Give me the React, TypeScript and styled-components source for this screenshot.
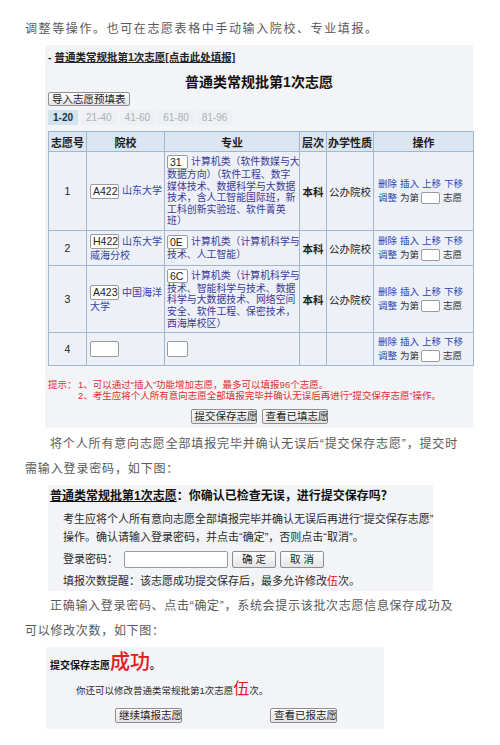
import styled, { createGlobalStyle } from "styled-components";

const GlobalStyle = createGlobalStyle`
  body {
    margin: 0;
    background: #fff;
    font-family: "Liberation Sans", "Noto Sans CJK SC", sans-serif;
  }
`;

const Page = styled.div`
  width: 500px;
  padding-top: 17px;
  padding-bottom: 10px;
`;

const Para = styled.p<{ $indent?: boolean; $gap?: number; $spacing?: number }>`
  margin: ${(p) => p.$gap ?? 0}px 0 0;
  padding-left: 25px;
  font-size: 12px;
  line-height: 25px;
  letter-spacing: ${(p) => p.$spacing ?? 1.1}px;
  color: #5a5a5a;
  white-space: nowrap;
  text-indent: ${(p) => (p.$indent ? "25px" : "0")};
`;

const Panel = styled.div<{ $left: number; $width: number; $gap: number }>`
  box-sizing: border-box;
  margin: ${(p) => p.$gap}px 0 0 ${(p) => p.$left}px;
  width: ${(p) => p.$width}px;
  background: #f3f4f8;
`;

const FormPanel = styled(Panel)`
  padding: 5px 3px 4px;
`;

const BatchLink = styled.div`
  font-size: 10.5px;
  line-height: 14px;
  font-weight: bold;
  color: #222;

  u {
    text-underline-offset: 1px;
  }
`;

const FormTitle = styled.h3`
  margin: 10px 0 2px;
  text-align: center;
  font-size: 14px;
  line-height: 16px;
  font-weight: bold;
  color: #111;
`;

const Toolbar = styled.div`
  display: flex;
`;

const Btn = styled.button<{ $w?: number; $h?: number }>`
  box-sizing: border-box;
  height: ${(p) => p.$h ?? 15}px;
  ${(p) => (p.$w ? `width: ${p.$w}px;` : "")}
  padding: 0 3px;
  font-family: inherit;
  font-size: 10.5px;
  line-height: 13px;
  color: #222;
  border: 1px solid #8e8e8e;
  border-radius: 2px;
  background: linear-gradient(#fefefe, #e4e4e4);
  white-space: nowrap;
  cursor: pointer;
`;

const Tabs = styled.div`
  display: flex;
  gap: 3px;
  margin-top: 4px;
`;

const Tab = styled.span<{ $active?: boolean }>`
  height: 15px;
  padding: 0 5px;
  font-size: 10px;
  line-height: 15px;
  background: ${(p) => (p.$active ? "#d2e4ee" : "#eef0f4")};
  color: ${(p) => (p.$active ? "#1f2d44" : "#aab0b8")};
  font-weight: ${(p) => (p.$active ? "bold" : "normal")};
`;

const Grid = styled.table`
  border-collapse: collapse;
  table-layout: fixed;
  width: 425px;
  margin-top: 6px;
  font-size: 10.5px;
  color: #222;
`;

const HeadCell = styled.th`
  height: 19px;
  padding: 0;
  border: 1px solid #a2b6cc;
  background: #dbe6f2;
  font-size: 11px;
  font-weight: bold;
  color: #1d1d1d;
  text-align: center;
  white-space: nowrap;
`;

const Cell = styled.td<{ $align?: string; $bold?: boolean; $pad?: string }>`
  padding: ${(p) => p.$pad ?? "2px 3px"};
  border: 1px solid #a2b6cc;
  background: #edf1f7;
  text-align: ${(p) => p.$align ?? "left"};
  font-weight: ${(p) => (p.$bold ? "bold" : "normal")};
  vertical-align: middle;
  white-space: nowrap;
  overflow: hidden;
`;

const CodeBox = styled.span<{ $w: number; $h?: number }>`
  display: inline-block;
  box-sizing: border-box;
  width: ${(p) => p.$w}px;
  height: ${(p) => p.$h ?? 15}px;
  margin-right: 3px;
  padding: 0 2px;
  border: 1px solid #9b9b9b;
  border-radius: 2px;
  background: #fff;
  font-size: 10.5px;
  line-height: 13px;
  color: #222;
  vertical-align: middle;
`;

const SchoolText = styled.span`
  display: inline-block;
  font-size: 10px;
  line-height: 12px;
  color: #3345a8;
  vertical-align: middle;
`;

const SchoolBlock = styled.div`
  font-size: 10px;
  line-height: 13px;
  color: #3345a8;
`;

const MajorText = styled.div`
  font-size: 9.9px;
  line-height: 11.6px;
  color: #3a3a98;
`;

const Ops = styled.div`
  font-size: 9.5px;
  line-height: 14px;
  color: #333;
`;

const OpLink = styled.a`
  color: #2b43b2;
  text-decoration: none;
  margin-right: 3px;
`;

const OrderBox = styled.span`
  display: inline-block;
  box-sizing: border-box;
  width: 19px;
  height: 12px;
  margin: 0 3px 0 2px;
  border: 1px solid #9b9b9b;
  border-radius: 2px;
  background: #fff;
  vertical-align: middle;
`;

const Hint = styled.div`
  display: flex;
  margin-top: 13px;
  font-size: 9.5px;
  line-height: 11px;
  color: #e0302e;
  white-space: nowrap;
`;

const HintLabel = styled.span`
  flex: none;
  width: 30px;
`;

const CenterButtons = styled.div`
  display: flex;
  justify-content: center;
  gap: 5px;
  margin-top: 8px;
`;

const ConfirmPanel = styled(Panel)`
  padding: 3px 0 2px 2px;
`;

const ConfirmTitle = styled.div`
  font-size: 12px;
  line-height: 16px;
  font-weight: bold;
  color: #111;
`;

const ConfirmBody = styled.div`
  margin-top: 6px;
  padding-left: 13px;
  font-size: 11px;
  line-height: 18px;
  color: #2a2a2a;
  white-space: nowrap;
`;

const PassRow = styled.div`
  display: flex;
  align-items: center;
  gap: 4px;
  height: 18px;
  margin-top: 4px;
`;

const PassInput = styled.span`
  box-sizing: border-box;
  width: 104px;
  height: 17px;
  margin-left: 2px;
  border: 1px solid #999;
  border-radius: 2px;
  background: #fff;
`;

const Reminder = styled.div`
  margin-top: 5px;
  line-height: 16px;
`;

const Red = styled.span<{ $size?: number }>`
  color: #e0201e;
  ${(p) => (p.$size ? `font-size: ${p.$size}px;` : "")}
`;

const DonePanel = styled(Panel)`
  padding: 3px 0 6px 4px;
`;

const DoneTitle = styled.div`
  font-size: 10px;
  line-height: 24px;
  font-weight: bold;
  color: #111;
`;

const BigRed = styled.span`
  font-size: 20px;
  font-weight: 500;
  color: #e0201e;
`;

const DoneLine = styled.div`
  margin-top: 2px;
  padding-left: 26px;
  font-size: 9.5px;
  line-height: 18px;
  color: #2a2a2a;
`;

const DoneButtons = styled.div`
  display: flex;
  gap: 88px;
  margin-top: 8px;
  padding-left: 65px;
`;

type Row = {
  no: number;
  code: string;
  school: string[];
  major: string;
  majorLines: string[];
  level: string;
  kind: string;
  h: number;
};

const ROWS: Row[] = [
  {
    no: 1,
    code: "A422",
    school: ["山东大学"],
    major: "31",
    majorLines: [
      "计算机类（软件数媒与大",
      "数据方向）（软件工程、数字",
      "媒体技术、数据科学与大数据",
      "技术，含人工智能国际班，新",
      "工科创新实验班、软件菁英",
      "班）",
    ],
    level: "本科",
    kind: "公办院校",
    h: 79,
  },
  {
    no: 2,
    code: "H422",
    school: ["山东大学", "威海分校"],
    major: "0E",
    majorLines: ["计算机类（计算机科学与", "技术、人工智能）"],
    level: "本科",
    kind: "公办院校",
    h: 35,
  },
  {
    no: 3,
    code: "A423",
    school: ["中国海洋", "大学"],
    major: "6C",
    majorLines: [
      "计算机类（计算机科学与",
      "技术、智能科学与技术、数据",
      "科学与大数据技术、网络空间",
      "安全、软件工程、保密技术，",
      "西海岸校区）",
    ],
    level: "本科",
    kind: "公办院校",
    h: 67,
  },
  { no: 4, code: "", school: [], major: "", majorLines: [], level: "", kind: "", h: 32 },
];

const COLS = [38, 78, 135, 27, 47, 100];
const TABS = ["1-20", "21-40", "41-60", "61-80", "81-96"];

const Lines = ({ lines }: { lines: string[] }) => (
  <>
    {lines.map((l, i) => (
      <span key={i}>
        {i > 0 && <br />}
        {l}
      </span>
    ))}
  </>
);

const OpsCell = () => (
  <Ops>
    <OpLink>删除</OpLink>
    <OpLink>插入</OpLink>
    <OpLink>上移</OpLink>
    <OpLink>下移</OpLink>
    <br />
    <OpLink>调整</OpLink>
    为第
    <OrderBox />
    志愿
  </Ops>
);

const SchoolCell = ({ r }: { r: Row }) => {
  const [first, ...rest] = r.school;
  return (
    <SchoolBlock>
      <CodeBox $w={29} $h={r.code ? 15 : 16}>
        {r.code}
      </CodeBox>
      {first && <SchoolText>{first}</SchoolText>}
      {rest.map((l) => (
        <div key={l}>{l}</div>
      ))}
    </SchoolBlock>
  );
};

export default function App() {
  return (
    <Page>
      <GlobalStyle />
      <Para $spacing={1.6}>调整等操作。也可在志愿表格中手动输入院校、专业填报。</Para>

      <FormPanel $left={45} $width={428} $gap={3}>
        <BatchLink>
          - <u>普通类常规批第1次志愿[点击此处填报]</u>
        </BatchLink>
        <FormTitle>普通类常规批第1次志愿</FormTitle>
        <Toolbar>
          <Btn $h={14}>导入志愿预填表</Btn>
        </Toolbar>
        <Tabs>
          {TABS.map((t, i) => (
            <Tab key={t} $active={i === 0}>
              {t}
            </Tab>
          ))}
        </Tabs>
        <Grid>
          <colgroup>
            {COLS.map((w, i) => (
              <col key={i} style={{ width: w }} />
            ))}
          </colgroup>
          <thead>
            <tr>
              <HeadCell>志愿号</HeadCell>
              <HeadCell>院校</HeadCell>
              <HeadCell>专业</HeadCell>
              <HeadCell>层次</HeadCell>
              <HeadCell>办学性质</HeadCell>
              <HeadCell>操作</HeadCell>
            </tr>
          </thead>
          <tbody>
            {ROWS.map((r) => (
              <tr key={r.no} style={{ height: r.h }}>
                <Cell $align="center">{r.no}</Cell>
                <Cell $pad="2px 1px 2px 3px">
                  <SchoolCell r={r} />
                </Cell>
                <Cell $pad="2px 1px 2px 2px">
                  <MajorText>
                    <CodeBox $w={21} $h={r.major ? 14 : 16}>
                      {r.major}
                    </CodeBox>
                    <Lines lines={r.majorLines} />
                  </MajorText>
                </Cell>
                <Cell $align="center" $bold $pad="0">
                  {r.level}
                </Cell>
                <Cell $align="center" $pad="0">
                  {r.kind}
                </Cell>
                <Cell $pad="2px 2px 2px 4px">
                  <OpsCell />
                </Cell>
              </tr>
            ))}
          </tbody>
        </Grid>
        <Hint>
          <HintLabel>提示：</HintLabel>
          <div>
            1、可以通过“插入”功能增加志愿，最多可以填报96个志愿。
            <br />
            2、考生应将个人所有意向志愿全部填报完毕并确认无误后再进行“提交保存志愿”操作。
          </div>
        </Hint>
        <CenterButtons>
          <Btn $w={66}>提交保存志愿</Btn>
          <Btn $w={66}>查看已填志愿</Btn>
        </CenterButtons>
      </FormPanel>

      <Para $indent $gap={4} $spacing={0.85}>
        将个人所有意向志愿全部填报完毕并确认无误后“提交保存志愿”，提交时
        <br />
        需输入登录密码，如下图：
      </Para>

      <ConfirmPanel $left={48} $width={385} $gap={3}>
        <ConfirmTitle>
          <u>普通类常规批第1次志愿</u>：你确认已检查无误，进行提交保存吗？
        </ConfirmTitle>
        <ConfirmBody>
          考生应将个人所有意向志愿全部填报完毕并确认无误后再进行“提交保存志愿”
          <br />
          操作。确认请输入登录密码，并点击“确定”，否则点击“取消”。
          <PassRow>
            登录密码：
            <PassInput />
            <Btn $w={44} $h={17}>
              确 定
            </Btn>
            <Btn $w={44} $h={17}>
              取 消
            </Btn>
          </PassRow>
          <Reminder>
            填报次数提醒：该志愿成功提交保存后，最多允许修改<Red>伍</Red>次。
          </Reminder>
        </ConfirmBody>
      </ConfirmPanel>

      <Para $indent $gap={3} $spacing={0.7}>
        正确输入登录密码、点击“确定”，系统会提示该批次志愿信息保存成功及
        <br />
        可以修改次数，如下图：
      </Para>

      <DonePanel $left={46} $width={338} $gap={3}>
        <DoneTitle>
          提交保存志愿<BigRed>成功</BigRed>。
        </DoneTitle>
        <DoneLine>
          你还可以修改普通类常规批第1次志愿<Red $size={16}>伍</Red>次。
        </DoneLine>
        <DoneButtons>
          <Btn $w={67}>继续填报志愿</Btn>
          <Btn $w={67}>查看已报志愿</Btn>
        </DoneButtons>
      </DonePanel>
    </Page>
  );
}
